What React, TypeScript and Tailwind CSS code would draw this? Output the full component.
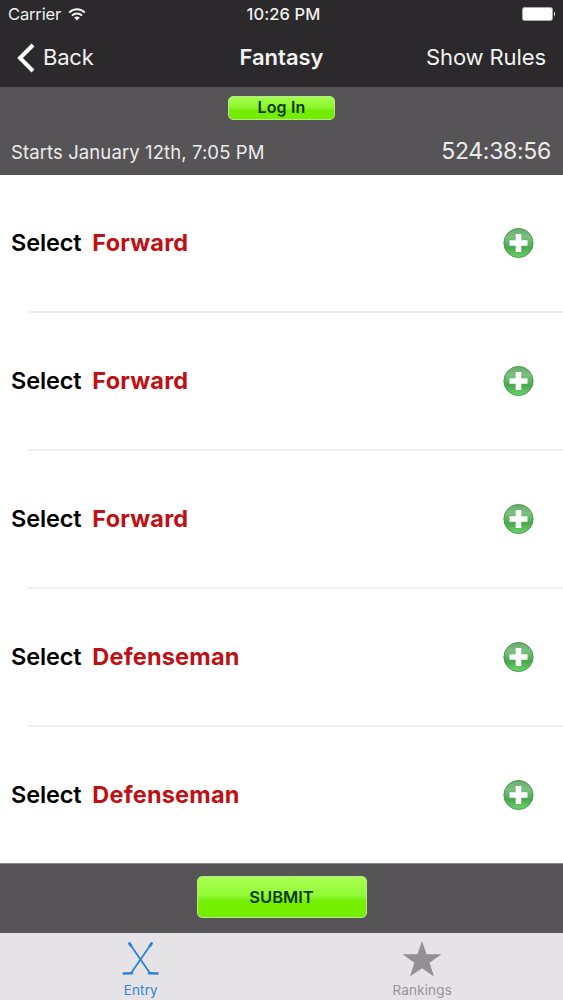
const positions = ["Forward", "Forward", "Forward", "Defenseman", "Defenseman"];

function WifiIcon() {
  return (
    <svg width="18" height="13" viewBox="0 0 18 13" fill="none" stroke="#f4f4f4" strokeWidth="2">
      <path d="M1.2 4.6a11 11 0 0 1 15.6 0" />
      <path d="M4 7.6a7.1 7.1 0 0 1 10 0" />
      <path d="M9 12.6 6.2 9.8a4 4 0 0 1 5.6 0z" fill="#f4f4f4" stroke="none" />
    </svg>
  );
}

function AddIcon() {
  return (
    <svg width="32" height="32" viewBox="0 0 32 32">
      <defs>
        <linearGradient id="ball" x1="0" y1="0" x2="0" y2="1">
          <stop offset="0" stopColor="#68a86c" />
          <stop offset="0.3" stopColor="#7cc280" />
          <stop offset="0.5" stopColor="#5fb363" />
          <stop offset="0.65" stopColor="#48a84d" />
          <stop offset="1" stopColor="#6cd66c" />
        </linearGradient>
      </defs>
      <circle cx="16.5" cy="16" r="14.6" fill="url(#ball)" stroke="#4d9852" strokeWidth="1" />
      <path d="M13.7 7h5.6v6.2h6.2v5.6h-6.2V25h-5.6v-6.2H7.5v-5.6h6.2z" fill="#fff" />
    </svg>
  );
}

function SticksIcon() {
  return (
    <svg width="38" height="36" viewBox="0 0 38 36" fill="none" stroke="#2b82dc" strokeLinecap="round">
      <path d="M7.5 2.5 27.5 31.5" strokeWidth="1.8" />
      <path d="M29.5 2.5 9.5 31.5" strokeWidth="1.8" />
      <path d="M27 32.2 35.5 32.5M10 32.2 1.7 32.5" strokeWidth="2.6" />
      <path d="m7.5 2.5 1.5 2.2M29.5 2.5 28 4.7" strokeWidth="2.8" />
    </svg>
  );
}

export default function App() {
  return (
    <main className="flex h-[1000px] w-[563px] flex-col overflow-hidden bg-white font-['Inter',sans-serif]">
      {/* Status bar */}
      <section className="grid h-[29px] grid-cols-3 items-center bg-[#2b292b] text-[#f0f0f0]">
        <div className="flex items-center gap-[7px] pl-[8px]">
          <span className="text-[16.5px] tracking-[-0.15px]">Carrier</span>
          <WifiIcon />
        </div>
        <span className="pl-[4px] text-center text-[16.5px] font-medium tracking-[0.1px]">10:26 PM</span>
        <div className="flex justify-end pr-[7px] pb-px">
          <svg width="34" height="14" viewBox="0 0 34 14" fill="#fff">
            <rect x="0.5" y="0.5" width="30" height="13" rx="2" stroke="#aaa" />
            <path d="M32 4.5q2 2.5 0 5z" />
          </svg>
        </div>
      </section>

      {/* Nav bar */}
      <nav className="grid h-[58px] grid-cols-3 items-center bg-[#2b292b] pb-px text-[22px] text-[#f2f2f2]">
        <div className="flex items-center gap-[8px] pl-[17px]">
          <svg width="18" height="30" viewBox="0 0 18 30" fill="none" stroke="#fff" strokeWidth="4">
            <path d="M16 2 3 15l13 13" />
          </svg>
          <span className="tracking-[-0.2px]">Back</span>
        </div>
        <h1 className="text-center font-semibold">Fantasy</h1>
        <span className="pr-[17px] text-right tracking-[-0.1px] whitespace-nowrap">Show Rules</span>
      </nav>

      {/* Contest header */}
      <section className="flex h-[88px] flex-col bg-[#565456] pt-[9px]">
        <button className="mx-auto h-[24px] w-[107px] rounded-[5px] border border-[#b5e88b] bg-linear-to-b from-[#a4ff4c] from-0% via-[#8af52b] via-50% to-[#73ec00] to-60% pb-[2px] text-[16px] leading-[19px] font-semibold tracking-[0.15px] text-[#0c3a08]">
          Log In
        </button>
        <div className="flex flex-1 items-center justify-between pt-[8px] pr-[12px] pl-[11px] text-[#ececec]">
          <span className="pt-[2px] text-[18.5px] tracking-[0.1px]">Starts January 12th, 7:05 PM</span>
          <span className="text-[23px] tracking-[-0.3px]">524:38:56</span>
        </div>
      </section>

      {/* Roster slots */}
      <section className="h-[688px]">
        {positions.map((position, i) => (
          <div key={i} className="flex h-[138px] flex-col">
            <div className="flex h-[136px] items-center justify-between pr-[29px] pb-[1px] pl-[11px]">
              <h2 className="flex gap-[11px] text-[23.5px] font-semibold">
                <span className="tracking-[-0.15px] text-black">Select</span>
                <span className="font-bold tracking-[0.2px] text-[#bf1013]">{position}</span>
              </h2>
              <AddIcon />
            </div>
            {i < positions.length - 1 && <div className="ml-[28px] h-[2px] bg-[#efeff0]" />}
          </div>
        ))}
      </section>

      <section className="flex h-[70px] items-center justify-center border-t border-[#8a898a] bg-[#565456] pb-[3px]">
        <button className="h-[42px] w-[170px] rounded-[5px] border border-[#b5e88b] bg-linear-to-b from-[#a8ff50] from-0% via-[#92fb36] via-45% to-[#76ee00] to-60% text-[16.5px] font-semibold text-[#0c3a08]">
          SUBMIT
        </button>
      </section>

      {/* Tab bar */}
      <section className="grid h-[67px] grid-cols-2 bg-[#e5e3e5] text-[13.5px]">
        <div className="flex flex-col items-center pt-[8px] text-[#3583d2]">
          <SticksIcon />
          <span className="mt-[4px] leading-[18px] tracking-[0.15px]">Entry</span>
        </div>
        <div className="flex flex-col items-center pt-[8px] text-[#969496]">
          <svg width="40" height="36" viewBox="0 0 40 36" fill="#929092">
            <path d="m20 0 4.6 13.2H39.5L27.6 21.8 32 35.5 20 27.2 8 35.5l4.4-13.7L.5 13.2h14.9z" />
          </svg>
          <span className="mt-[4px] leading-[18px] tracking-[0.15px]">Rankings</span>
        </div>
      </section>
    </main>
  );
}
